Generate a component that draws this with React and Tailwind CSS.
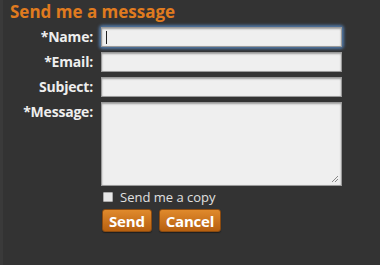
import React from "react";

const inputCls =
  "block w-[241px] h-[20px] bg-[#efefef] border border-[#9a9a9a] shadow-[inset_0_1px_2px_rgba(0,0,0,0.35)] outline-none px-1 text-[12px]";
const labelCls = "text-right text-[#eeeeee] font-bold text-[14px] leading-[20px] tracking-[-0.2px]";
const btnCls =
  "h-[23px] px-[6px] rounded-[3px] bg-gradient-to-b from-[#e08a2c] to-[#b7600f] border border-[#8a4a10] text-white font-bold text-[15px] leading-[20px] tracking-[-0.2px] shadow-[0_1px_1px_rgba(0,0,0,0.4)]";

export default function App() {
  return (
    <div
      className="w-[380px] h-[265px] bg-[#333333] overflow-hidden border-l-[3px] border-[#3a3a3a]"
      style={{ fontFamily: '"Open Sans", "DejaVu Sans", sans-serif' }}
    >
      <h1 className="text-[#e07b1f] font-bold text-[17px] leading-[20px] pl-[7px] pt-[2px]">
        Send me a message
      </h1>
      <div className="grid grid-cols-[90px_auto] gap-x-[8px] gap-y-[5px] mt-[5px] items-start">
        <label className={labelCls}>*Name:</label>
        <div className="rounded-[2px] shadow-[0_0_3px_2px_rgba(90,140,200,0.75)] w-[241px]">
          <div className={inputCls + " border-[#5a8ac0] flex items-center"}>
            <span className="w-[1px] h-[13px] bg-[#222]"></span>
          </div>
        </div>
        <label className={labelCls}>*Email:</label>
        <div className={inputCls}></div>
        <label className={labelCls}>Subject:</label>
        <div className={inputCls}></div>
        <label className={labelCls}>*Message:</label>
        <div className="relative w-[241px] h-[84px] bg-[#efefef] border border-[#9a9a9a] shadow-[inset_0_1px_2px_rgba(0,0,0,0.35)]">
          <svg className="absolute right-[2px] bottom-[2px]" width="8" height="8" viewBox="0 0 8 8">
            <line x1="1" y1="7" x2="7" y2="1" stroke="#888" strokeWidth="1" />
            <line x1="4" y1="7" x2="7" y2="4" stroke="#888" strokeWidth="1" />
          </svg>
        </div>
        <div></div>
        <div className="flex items-center gap-[7px] -mt-[2px] pl-[2px]">
          <span className="w-[10px] h-[10px] bg-[#e8e8e8] border border-[#aaa] rounded-[1px]"></span>
          <span className="text-[#e0e0e0] text-[13px] leading-[16px]">Send me a copy</span>
        </div>
        <div></div>
        <div className="flex gap-[7px] pl-[1px] -mt-[1px]">
          <button className={btnCls}>Send</button>
          <button className={btnCls}>Cancel</button>
        </div>
      </div>
    </div>
  );
}
